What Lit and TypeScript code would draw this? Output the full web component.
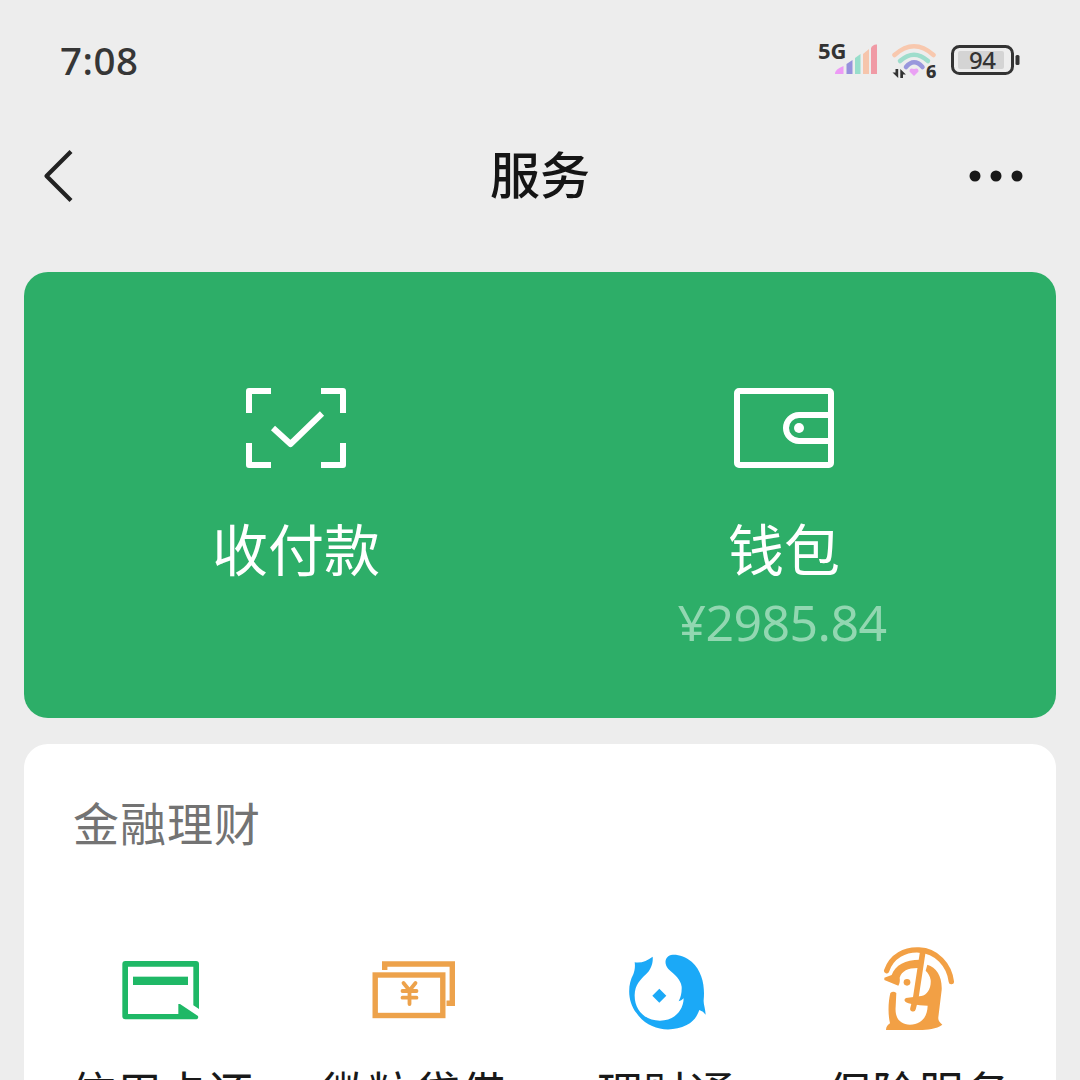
import { LitElement, html, css } from "lit";
import { customElement } from "lit/decorators.js";

const entries = [
  {
    label: "信用卡还",
    icon: html`<svg width="80" height="64" viewBox="180 90 240 192" fill="#1fb866">
      <path d="M196 93H408Q417 93 417 102V237L400 226V110H204V252H355V222H360L414 258Q417 268 406 268H196Q187 268 187 259V102Q187 93 196 93Z"/>
      <rect x="219" y="140" width="165" height="25"/></svg>`,
    cls: "credit",
  },
  {
    label: "微粒贷借",
    icon: html`<svg width="84" height="60" viewBox="0 0 84 60" fill="none" stroke="#eda24b" stroke-width="5.400">
      <path d="M12.700 10V4H80.300V43.300H74.500"/>
      <rect x="3.200" y="15" width="67.600" height="40.500"/>
      <path stroke-width="3.800" stroke-linecap="round" d="M31.500 23L37.500 30.500L43.500 23M30.500 31H44.500M30.500 37.700H44.500M37.500 31V44"/></svg>`,
    cls: "loan",
  },
  {
    label: "理财通",
    icon: html`<svg width="80" height="80" viewBox="114 60 240 240" fill="#1ba9f7">
      <path d="M188 80C172 92 155 100 134 97C136 110 134 122 130 133C112 165 112 215 140 250C175 300 240 310 290 285C310 275 320 262 328 240Q340 243 347 254C346 235 340 222 341 210C345 170 338 125 305 95C288 80 265 73 248 74C225 76 220 100 235 117C255 135 272 148 275 170Q276 195 266 214Q274 212 281 205C280 245 250 272 210 272C165 272 133 240 134 195C135 165 150 150 168 133C182 120 190 100 188 80Z"/>
      <path d="M208 176L229 197L208 218L187 197Z"/></svg>`,
    cls: "wealth",
  },
  {
    label: "保险服务",
    icon: html`<svg width="72" height="86" viewBox="186 51 216 258" fill="#f2a045">
      <path d="M200 122C215 78 255 58 297 60C350 62 388 105 394 155" fill="none" stroke="#f2a045" stroke-width="16" stroke-linecap="round"/>
      <path d="M300 89C255 89 226 105 215 135L193 143V150L235 167C240 160 240 150 239 143C246 122 265 113 298 114Z"/>
      <path d="M322 104C350 112 367 140 365 180L355 262C354 272 358 276 367 284C350 297 320 300 300 300H198C198 290 203 285 210 280C203 250 205 215 211 189Q220 182 229 189L227 230C224 265 240 283 270 284C305 284 322 260 323 227C290 226 264 221 256 215Q250 209 258 204L304 198C322 195 334 175 332 150C330 138 325 130 317 122Z"/>
      <circle cx="261" cy="157" r="10"/>
      <path d="M308 68L287 205L279 236" fill="none" stroke="#f2a045" stroke-width="17" stroke-linecap="round" stroke-linejoin="round"/></svg>`,
    cls: "insure",
  },
];

@customElement("status-bar")
class StatusBar extends LitElement {
  static styles = css`
    :host { display: flex; flex: none; justify-content: space-between; align-items: center; height: 120px; box-sizing: border-box; padding: 0 58px 0 60px; color: #363636; font-family: "Noto Sans", sans-serif; }
    .time { font-size: 38.500px; font-weight: 500; line-height: 48px; letter-spacing: .5px; }
    .indicators { display: block; }
    .net { font: 700 22px "Noto Sans", sans-serif; }
    .level { font: 500 24px "Noto Sans", sans-serif; }
    .gen { font: 800 18px "Noto Sans", sans-serif; }
  `;
  render() {
    return html`<span class="time">7:08</span>
      <svg class="indicators" width="204" height="44" viewBox="818 38 204 44" fill="#333">
        <text class="net" x="818" y="58.500">5G</text>
        <path d="M835 74Q835 69 843.500 66V74Z" fill="#ed9af5"/>
        <path d="M846.500 74V64L852.500 60V74Z" fill="#9691dc"/>
        <path d="M855 74V58L860.500 54V74Z" fill="#98decb"/>
        <path d="M863 74V54L869 49V74Z" fill="#f6c5ac"/>
        <path d="M871 74V48Q873 44 877 44.500V74Z" fill="#f09aa5"/>
        <g fill="none" stroke-linecap="round">
          <path d="M894.500 55Q914 37.500 933.500 55" stroke="#f8c8ae" stroke-width="4.500"/>
          <path d="M900 61Q914 48.500 928 61" stroke="#9eddcc" stroke-width="4.500"/>
          <path d="M906 67Q914 57.500 922.500 67" stroke="#9997dc" stroke-width="4.500"/>
        </g>
        <path d="M914 76L909.500 71.500Q909.500 67 914 69Q918.500 67 918.500 71.500Z" fill="#eaa1f4"/>
        <path d="M898.200 69V78L892.500 72.500H895.500V69ZM900.300 78V69L905.900 74.500H903V78Z"/>
        <text class="gen" x="926" y="78">6</text>
        <rect x="952.500" y="46.500" width="60" height="27" rx="7" fill="none" stroke="#333" stroke-width="3"/>
        <rect x="958" y="51" width="46" height="18" rx="2" fill="#d4d4d4"/>
        <rect x="1015.500" y="55" width="4" height="10" rx="1.500"/>
        <text class="level" x="969" y="69" textLength="27">94</text>
      </svg>`;
  }
}

@customElement("app-root")
class AppRoot extends LitElement {
  static styles = css`
    :host { display: flex; flex-direction: column; width: 1080px; height: 1080px; overflow: hidden; background: #ededed; font-family: "Noto Sans CJK SC", sans-serif; }
    .nav { display: grid; grid-template-columns: 60px 1fr 60px; align-items: center; height: 112px; padding: 0 53px 0 42px; margin-bottom: 40px; flex: none; box-sizing: border-box; }
    .nav svg { display: block; }
    .title { text-align: center; font-size: 50px; font-weight: 500; line-height: 72px; color: #151515; padding: 0 0 9px 11px; }
    .pay { display: grid; grid-template-columns: 1fr 1fr; height: 446px; margin: 0 24px 26px; padding: 116px 28px 0; box-sizing: border-box; border-radius: 24px; background: #2dae68; color: #fff; flex: none; }
    .action { display: flex; flex-direction: column; align-items: center; }
    .action svg { display: block; }
    .name { margin-top: 39px; font-size: 56px; line-height: 80px; }
    .balance { font-family: "Noto Sans", sans-serif; font-size: 50px; line-height: 60px; margin-top: 5px; padding-right: 4px; letter-spacing: -.6px; color: #92d7b1; }
    .finance { margin: 0 24px; padding: 45px 12px 0; height: 336px; box-sizing: border-box; border-radius: 24px 24px 0 0; background: #fff; flex: none; }
    .heading { margin-left: 37px; font-size: 46px; line-height: 64px; letter-spacing: 1px; color: #737373; }
    .grid { display: grid; grid-template-columns: repeat(4, 1fr); margin-top: 89px; }
    .entry { display: flex; flex-direction: column; align-items: center; }
    .pic { display: flex; align-items: center; justify-content: center; height: 96px; box-sizing: border-box; }
    .pic.wealth { padding-left: 4px; }
    .pic.credit { padding: 4px 4px 0 0; }
    .label { margin-top: 20px; font-size: 46px; line-height: 64px; color: #191919; }
  `;
  render() {
    return html`
      <status-bar></status-bar>
      <div class="nav">
        <svg width="34" height="54" viewBox="0 0 34 54" fill="none" stroke="#222" stroke-width="4.200"><path d="M29 2.500L4.500 27L29 51.500" stroke-linejoin="round"/></svg>
        <div class="title">服务</div>
        <svg width="60" height="14" viewBox="0 0 60 14" fill="#191919"><circle cx="8" cy="7" r="5.500"/><circle cx="29" cy="7" r="5.500"/><circle cx="50" cy="7" r="5.500"/></svg>
      </div>
      <div class="pay">
        <div class="action">
          <svg width="100" height="80" viewBox="0 0 100 80" fill="none" stroke="#fff" stroke-width="6" stroke-linejoin="round"><path d="M3 25V3H25M75 3H97V25M97 55V77H75M25 77H3V55"/><path d="M27 40L44.500 56L76 25.500"/></svg>
          <div class="name">收付款</div>
        </div>
        <div class="action">
          <svg width="100" height="80" viewBox="0 0 100 80" fill="none" stroke="#fff" stroke-width="6"><rect x="3" y="3" width="94" height="74" rx="2"/><path d="M97 27H65A13 13 0 0 0 65 53H97"/><circle cx="65" cy="40" r="5" fill="#fff" stroke="none"/></svg>
          <div class="name">钱包</div>
          <div class="balance">¥2985.84</div>
        </div>
      </div>
      <div class="finance">
        <div class="heading">金融理财</div>
        <div class="grid">
          ${entries.map((e) => html`<div class="entry"><div class="pic ${e.cls}">${e.icon}</div><div class="label">${e.label}</div></div>`)}
        </div>
      </div>`;
  }
}
